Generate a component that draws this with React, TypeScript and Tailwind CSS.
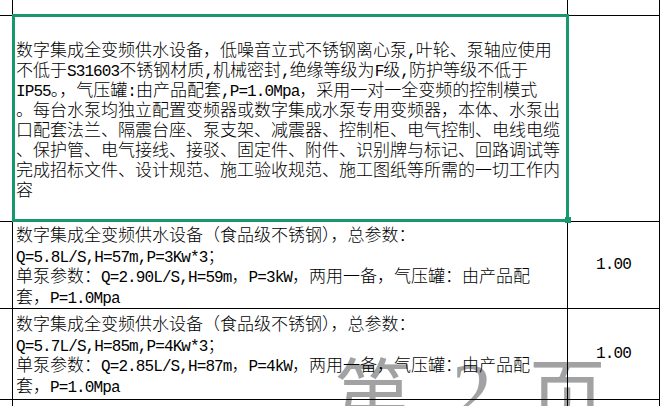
import React from "react";

const cjk = "font-['Noto_Sans_CJK_SC',sans-serif]";
const mono = "font-['Liberation_Mono',monospace] font-normal text-[16px] tracking-[-0.9px] leading-none";

// Latin runs get a monospace face so they keep the half-width pitch of the sheet font
function Mixed({ text }: { text: string }) {
  const parts = text.split(/([\x20-\x7e]+)/);
  return (
    <>
      {parts.map((p, i) =>
        /^[\x20-\x7e]+$/.test(p) ? (
          <span key={i} className={mono}>
            {p}
          </span>
        ) : (
          <span key={i}>{p}</span>
        )
      )}
    </>
  );
}

const mainLines = [
  "数字集成全变频供水设备，低噪音立式不锈钢离心泵,叶轮、泵轴应使用",
  "不低于S31603不锈钢材质,机械密封,绝缘等级为F级,防护等级不低于",
  "IP55。，气压罐:由产品配套,P=1.0Mpa，采用一对一全变频的控制模式",
  "。每台水泵均独立配置变频器或数字集成水泵专用变频器，本体、水泵出",
  "口配套法兰、隔震台座、泵支架、减震器、控制柜、电气控制、电线电缆",
  "、保护管、电气接线、接驳、固定件、附件、识别牌与标记、回路调试等",
  "完成招标文件、设计规范、施工验收规范、施工图纸等所需的一切工作内",
  "容",
];

const rows = [
  {
    h: "h-[87px]",
    lines: [
      "数字集成全变频供水设备（食品级不锈钢），总参数：",
      "Q=5.8L/S,H=57m,P=3Kw*3；",
      "单泵参数：Q=2.90L/S,H=59m，P=3kW，两用一备，气压罐：由产品配",
      "套，P=1.0Mpa",
    ],
    qty: "1.00",
  },
  {
    h: "h-[91px]",
    lines: [
      "数字集成全变频供水设备（食品级不锈钢），总参数：",
      "Q=5.7L/S,H=85m,P=4Kw*3；",
      "单泵参数：Q=2.85L/S,H=87m，P=4kW，两用一备，气压罐：由产品配",
      "套，P=1.0Mpa",
    ],
    qty: "1.00",
  },
];

const grid = "border-b border-[#e2e2e2]";

export default function App() {
  return (
    <div className={`relative w-[661px] h-[406px] overflow-hidden bg-white text-black font-light ${cjk}`}>
      {/* page break watermark */}
      <div className="absolute inset-0 text-[#a2a2a2] leading-none font-normal [text-shadow:0_0_1px_#d6e6f5]">
        <span className="absolute left-[334px] top-[351px] text-[78px]">第</span>
        <span className="absolute left-[452px] top-[352px] text-[80px] font-['Liberation_Serif',serif]">2</span>
        <span className="absolute left-[528px] top-[351px] text-[78px]">页</span>
      </div>

      <div className="relative flex flex-col">
        {/* row above selection */}
        <div className="flex h-[16px]">
          <div className={`w-[13px] border-r border-black ${grid}`} />
          <div className={`w-[555px] border-r border-black ${grid}`} />
          <div className={`w-[92px] border-r border-black ${grid}`} />
        </div>

        {/* selected row */}
        <div className="flex h-[206px]">
          <div className={`w-[13px] border-r border-black ${grid}`} />
          <div className={`w-[555px] border-r border-black ${grid} flex items-center pl-[3px] text-[17px] whitespace-nowrap`}>
            <div>
              {mainLines.map((l, i) => (
                <div key={i} className="h-[20px] leading-[20px]">
                  <Mixed text={l} />
                </div>
              ))}
            </div>
          </div>
          <div className={`w-[92px] border-r border-black ${grid}`} />
        </div>

        {rows.map((r, ri) => (
          <div key={ri} className={`flex ${r.h}`}>
            <div className={`w-[13px] border-r border-black ${grid}`} />
            <div className={`w-[555px] border-r border-black ${grid} flex items-center pl-[3px] text-[17px] whitespace-nowrap`}>
              <div>
                {r.lines.map((l, i) => (
                  <div key={i} className="h-[20.5px] leading-[20.5px]">
                    <Mixed text={l} />
                  </div>
                ))}
              </div>
            </div>
            <div className={`w-[92px] border-r border-black ${grid} flex items-center justify-center`}>
              <span className={mono}>{r.qty}</span>
            </div>
          </div>
        ))}

        <div className="flex h-[7px]">
          <div className="w-[13px] border-r border-black" />
          <div className="w-[555px] border-r border-black" />
          <div className="w-[92px] border-r border-black" />
        </div>
      </div>

      {/* selection frame */}
      <div className="absolute left-[12px] top-[14px] w-[557px] h-[208px] border-[3px] border-[#17996c]" />
      <div className="absolute left-[565px] top-[217px] w-[6px] h-[6px] bg-[#17996c]" />
    </div>
  );
}
